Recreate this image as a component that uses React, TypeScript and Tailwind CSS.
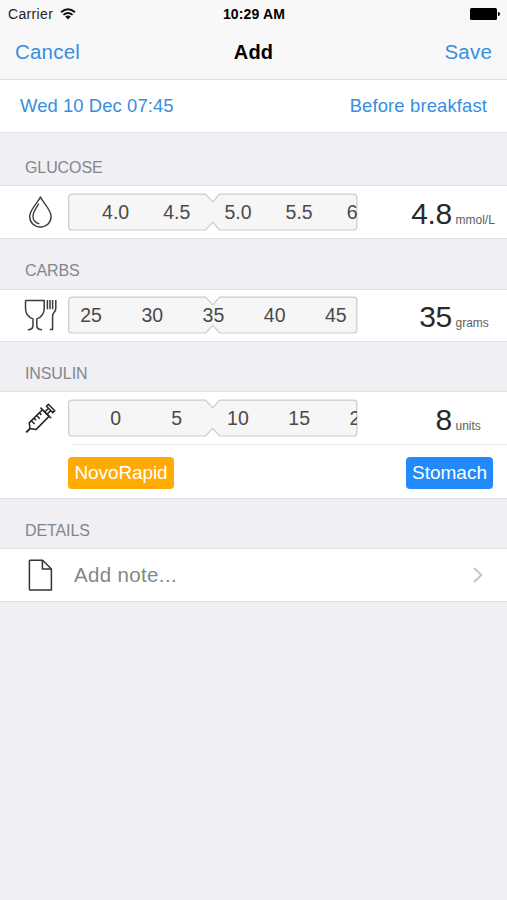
import React from 'react';

interface RulerProps {
  ticks: string[];
  stripClassName: string;
}

const Ruler: React.FC<RulerProps> = ({ ticks, stripClassName }) => {
  return (
    <div className="relative h-[38px] w-[290px] shrink-0 overflow-hidden">
      <svg className="absolute inset-0" width="290" height="38" viewBox="0 0 290 38" fill="none">
        <path
          d="M4.2 1.2H137.6L144.7 8.9L151.6 1.2H285.2Q288.9 1.2 288.9 4.8V33.4Q288.9 37 285.2 37H151.6L144.7 29.4L137.6 37H4.2Q.6 37 .6 33.4V4.8Q.6 1.2 4.2 1.2Z"
          fill="#f6f6f6"
          stroke="#cbcbcb"
          strokeWidth="1.2"
        />
      </svg>
      <div className="relative h-full w-[289px] overflow-hidden">
        <div className={`flex h-full items-center ${stripClassName}`}>
          {ticks.map((tick) => (
            <span key={tick} className="w-[61.2px] shrink-0 text-center text-[19.5px] leading-6 text-[#4a4a4a]">
              {tick}
            </span>
          ))}
        </div>
      </div>
    </div>
  );
};

interface ReadingProps {
  value: string;
  unit: string;
}

const Reading: React.FC<ReadingProps> = ({ value, unit }) => (
  <div className="flex flex-1 items-baseline pt-[3px]">
    <span className="w-[94px] text-right text-[30px] leading-8 tracking-[-0.3px] text-[#2a2a2a]">{value}</span>
    <span className="ml-[3.5px] text-[12px] leading-4 text-[#606060]">{unit}</span>
  </div>
);

const SectionHeader: React.FC<{ title: string; className: string }> = ({ title, className }) => (
  <h2 className={`flex items-end border-b border-[#e2e2e6] px-[25px] text-[16px] leading-5 tracking-[-0.1px] text-[#86868b] ${className}`}>
    {title}
  </h2>
);

const DropIcon = () => (
  <svg width="32" height="34" viewBox="0 0 32 34" fill="none" stroke="#3c3c3c" strokeWidth="1.4" strokeLinejoin="round">
    <path d="M16.4 2C14.2 7.3 5.7 14.6 5.7 21.3C5.7 27.8 10.2 32 16.4 32S27.1 27.8 27.1 21.3C27.1 14.6 18.6 7.3 16.4 2Z" />
    <path d="M14.6 9C12.3 13.2 9 17 9 21.2C9 25 11.1 27.6 14.8 28.7" strokeLinecap="round" />
  </svg>
);

const MealIcon = () => (
  <svg className="-mt-[2px]" width="33" height="34" viewBox="0 0 33 34" fill="none" stroke="#3c3c3c" strokeWidth="1.5" strokeLinejoin="round">
    <path d="M1.5 2.4H20.2V10C20.2 16.5 16.4 19.6 12.8 20.9V27.2Q12.8 31.6 18 31.8M1.5 2.4V10C1.5 16.5 5.3 19.6 9 20.9V27.2Q9 31.6 3.8 31.8" />
    <path d="M23.4 1.9V11.3M26 1.9V11.3M28.6 1.9V11.3M31.8 1.9V10.4C31.8 14 28.6 14.4 28.6 17.8V31.4H25.8" />
  </svg>
);

const SyringeIcon = () => (
  <svg width="32" height="34" viewBox="0 0 32 34" fill="none" stroke="#262626" strokeWidth="1.5" strokeLinejoin="round">
    <path d="M2.2 31.4L6.2 27.4" strokeWidth="2" />
    <path d="M6 27.6L5.2 21.9L18.3 8.7L25.1 15.4L11.9 28.6Z" />
    <path d="M16.4 6.6L27.2 17.3M20.8 11L25 6.8M23.1 13.2L27.2 9M24.4 3.3L30.8 9.7M24.4 3.3L22.4 5.2L28.8 11.6L30.8 9.7Z" />
    <path d="M7.3 19.8L10.6 23M10 17.1L12.1 19.2M12.6 14.5L15.8 17.7M15.3 11.8L17.4 13.9" />
  </svg>
);

const NoteIcon = () => (
  <svg width="32" height="34" viewBox="0 0 32 34" fill="none" stroke="#333" strokeWidth="1.5" strokeLinejoin="round">
    <path d="M6.2 2.2H18.6L27.4 11V32H6.2Q5.4 32 5.4 31.2V3Q5.4 2.2 6.2 2.2Z" />
    <path d="M18.4 2.4V11H27.2" />
  </svg>
);

export default function App() {
  return (
    <div className="flex h-[900px] w-[507px] flex-col overflow-hidden bg-[#efeff4] font-['Liberation_Sans',Arial,sans-serif] whitespace-nowrap">
      <header className="h-[80px] shrink-0 border-b border-[#dedee1] bg-[#f8f8f8]">
        <div className="grid h-[27px] grid-cols-3 items-center pr-[7px] pl-2 text-[14px] leading-4 text-[#222]">
          <div className="flex items-center gap-[7px]">
            <span className="tracking-[0.35px]">Carrier</span>
            <svg width="16" height="12" viewBox="0 0 16 12" fill="none" stroke="#111" strokeWidth="1.9">
              <path d="M1 4.2Q8 -1.8 15 4.2M3.4 6.9Q8 3 12.6 6.9" />
              <path d="M8 11.4L5.2 8.6Q8 6.4 10.8 8.6Z" fill="#111" stroke="none" />
            </svg>
          </div>
          <span className="text-center text-[14px] font-bold tracking-[0.15px] text-black">10:29 AM</span>
          <div className="flex items-center justify-end">
            <span className="h-3 w-[27px] rounded-[1.5px] bg-black" />
            <span className="ml-px h-1 w-[2px] rounded-r-full bg-black" />
          </div>
        </div>
        <div className="grid h-[50px] grid-cols-3 items-center px-[15px] text-[20.5px] leading-6 tracking-[0.2px] text-[#378de3]">
          <span>Cancel</span>
          <h1 className="text-center text-[20px] font-bold text-black">Add</h1>
          <span className="text-right">Save</span>
        </div>
      </header>

      <div className="flex h-[53px] shrink-0 items-center justify-between border-b border-[#e2e2e6] bg-white px-5 text-[18.4px] leading-6 text-[#378de3]">
        <span className="tracking-[0.1px]">Wed 10 Dec 07:45</span>
        <span className="tracking-[0.15px]">Before breakfast</span>
      </div>

      <SectionHeader title="GLUCOSE" className="h-[53px] pb-[7px]" />
      <section className="flex h-[53px] shrink-0 items-center border-b border-[#e2e2e6] bg-white pl-6">
        <DropIcon />
        <div className="ml-3 flex flex-1 items-center">
          <Ruler ticks={['4.0', '4.5', '5.0', '5.5', '6.0']} stripClassName="pl-[17px]" />
          <Reading value="4.8" unit="mmol/L" />
        </div>
      </section>

      <SectionHeader title="CARBS" className="h-[51px] pb-[8px]" />
      <section className="flex h-[52px] shrink-0 items-center border-b border-[#e2e2e6] bg-white pl-6">
        <MealIcon />
        <div className="-mt-px ml-[11px] flex flex-1 items-center">
          <Ruler ticks={['25', '30', '35', '40', '45']} stripClassName="-ml-[7.5px]" />
          <Reading value="35" unit="grams" />
        </div>
      </section>

      <SectionHeader title="INSULIN" className="h-[50px] pb-[7px]" />
      <section className="h-[107px] shrink-0 border-b border-[#e2e2e6] bg-white">
        <div className="flex h-[52px] items-center pl-6">
          <SyringeIcon />
          <div className="ml-3 flex flex-1 items-center">
            <Ruler ticks={['0', '5', '10', '15', '20']} stripClassName="pl-[17px]" />
            <Reading value="8" unit="units" />
          </div>
        </div>
        <div className="ml-[73px] h-px bg-[#e9e9ec]" />
        <div className="mt-[12px] flex items-center justify-between pr-[14px] pl-[68px] text-[19px] leading-8 text-white">
          <span className="w-[106px] rounded-[4px] bg-[#ffab03] text-center tracking-[-0.1px]">NovoRapid</span>
          <span className="w-[87px] rounded-[4px] bg-[#238afa] text-center">Stomach</span>
        </div>
      </section>

      <SectionHeader title="DETAILS" className="h-[50px] pb-[7px]" />
      <section className="flex h-[53px] shrink-0 items-center border-b border-[#e2e2e6] bg-white pr-6 pl-6">
        <NoteIcon />
        <span className="ml-[18px] flex-1 text-[20.5px] leading-6 tracking-[0.35px] text-[#868686]">Add note...</span>
        <svg width="10" height="16" viewBox="0 0 10 16" fill="none" stroke="#c4c4c8" strokeWidth="2">
          <path d="M1 1L8.4 8L1 15" />
        </svg>
      </section>
    </div>
  );
}
